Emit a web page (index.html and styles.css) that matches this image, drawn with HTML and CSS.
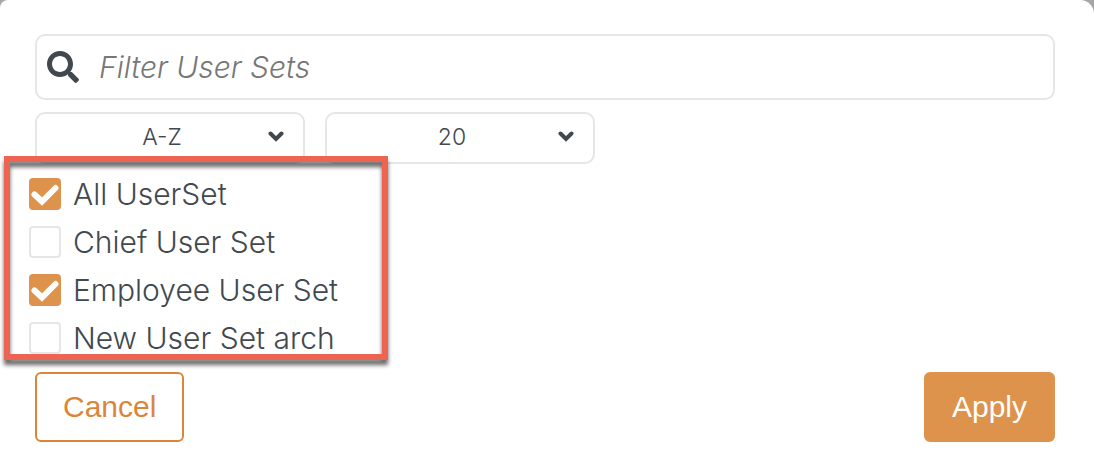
FILE: index.html
```
<!DOCTYPE html>
<html lang="en">
<head>
    <meta charset="UTF-8">
    <meta name="viewport" content="width=device-width, initial-scale=1.0">
    <title>Filter User Sets</title>
    <link rel="stylesheet" href="styles.css">
</head>
<body>
    <form class="dialog">
        <div class="search">
            <svg class="search-icon" viewBox="0 0 512 512" aria-hidden="true"><path d="M505 442.700 405.300 343c-4.500-4.500-10.600-7-17-7H372c27.600-35.300 44-79.700 44-128C416 93.100 322.900 0 208 0S0 93.100 0 208s93.100 208 208 208c48.300 0 92.700-16.400 128-44v16.300c0 6.400 2.500 12.500 7 17l99.700 99.700c9.400 9.400 24.600 9.400 33.900 0l28.300-28.300c9.400-9.400 9.400-24.600.1-34zM208 336c-70.700 0-128-57.200-128-128 0-70.700 57.200-128 128-128 70.700 0 128 57.200 128 128 0 70.700-57.200 128-128 128z"/></svg>
            <input type="text" id="filter" placeholder="Filter User Sets" aria-label="Filter User Sets">
        </div>

        <div class="selects">
            <div class="select">
                <select id="sortOrder" aria-label="Sort order">
                    <option>A-Z</option>
                    <option>Z-A</option>
                </select>
                <svg class="chevron" viewBox="0 0 16 12" aria-hidden="true"><path d="M2.500 3.500 8 9l5.500-5.500"/></svg>
            </div>
            <div class="select">
                <select id="pageSize" aria-label="Results per page">
                    <option>20</option>
                    <option>50</option>
                </select>
                <svg class="chevron" viewBox="0 0 16 12" aria-hidden="true"><path d="M2.500 3.500 8 9l5.500-5.500"/></svg>
            </div>
        </div>

        <div class="user-sets">
            <label class="user-set">
                <input type="checkbox" checked>
                <svg class="tick" viewBox="0 0 32 32" aria-hidden="true"><path d="M5.500 16.500l7.500 7L26.500 10"/></svg>
                <span>All UserSet</span>
            </label>
            <label class="user-set">
                <input type="checkbox">
                <svg class="tick" viewBox="0 0 32 32" aria-hidden="true"><path d="M5.500 16.500l7.500 7L26.500 10"/></svg>
                <span>Chief User Set</span>
            </label>
            <label class="user-set">
                <input type="checkbox" checked>
                <svg class="tick" viewBox="0 0 32 32" aria-hidden="true"><path d="M5.500 16.500l7.500 7L26.500 10"/></svg>
                <span>Employee User Set</span>
            </label>
            <label class="user-set">
                <input type="checkbox">
                <svg class="tick" viewBox="0 0 32 32" aria-hidden="true"><path d="M5.500 16.500l7.500 7L26.500 10"/></svg>
                <span>New User Set arch</span>
            </label>
            <div class="highlight"></div>
        </div>

        <div class="actions">
            <button type="button" class="cancel">Cancel</button>
            <button type="button" class="apply">Apply</button>
        </div>
    </form>
</body>
</html>
```
FILE: styles.css
```
* {
    box-sizing: border-box;
}

body {
    font-family: Inter, sans-serif;
    background: #a6a6a6;
    color: #41494f;
    margin: 0;
}

.dialog {
    min-height: 100vh;
    padding: 34px 39px 26px 35px;
    background: white;
    border-radius: 8px 14px 0 0;
}

.search {
    display: flex;
    align-items: center;
    gap: 20px;
    height: 66px;
    padding: 0 10px;
    border: 2px solid #e6e6e6;
    border-radius: 10px;
}

.search-icon {
    width: 32px;
    height: 32px;
    fill: #41494f;
}

.search input {
    flex: 1;
    min-width: 0;
    padding: 0;
    border: none;
    outline: none;
    background: none;
    font: italic 350 30px Inter, sans-serif;
    color: #41494f;
}

.search input::placeholder {
    color: #777;
    opacity: 1;
}

.selects {
    display: flex;
    gap: 20px;
    margin-top: 12px;
}

.select {
    display: grid;
    align-items: center;
    width: 270px;
}

.select select,
.chevron {
    grid-area: 1 / 1;
}

.select select {
    width: 100%;
    height: 52px;
    padding: 0 16px 2px 0;
    appearance: none;
    border: 2px solid #e6e6e6;
    border-radius: 10px;
    background: white;
    font: 350 23px Inter, sans-serif;
    color: #41494f;
    text-align: center;
    text-align-last: center;
}

.chevron {
    justify-self: end;
    width: 16px;
    height: 12px;
    margin: 0 21px 4px 0;
    fill: none;
    stroke: #41494f;
    stroke-width: 4;
    stroke-linecap: round;
    pointer-events: none;
}

.user-sets {
    position: relative;
    width: fit-content;
    margin: 6px 0 0 -6px;
}

.user-set {
    display: grid;
    grid-template-columns: 32px auto;
    align-items: center;
    column-gap: 12px;
    height: 48px;
    font-size: 30px;
    font-weight: 350;
    line-height: 48px;
}

.user-set input,
.tick {
    grid-area: 1 / 1;
    width: 32px;
    height: 32px;
}

.user-set input {
    appearance: none;
    margin: 0;
    border: 2px solid #e6e6e6;
    border-radius: 4px;
    background: white;
}

.user-set input:checked {
    border-color: #dd934c;
    background: #dd934c;
}

.tick {
    fill: none;
    stroke: white;
    stroke-width: 6;
    stroke-linecap: round;
    pointer-events: none;
    visibility: hidden;
}

.user-set input:checked + .tick {
    visibility: visible;
}

/* marker frame over the list */
.highlight {
    position: absolute;
    top: -14px;
    bottom: 2px;
    left: -25px;
    width: 384px;
    border: 6px solid #ed6453;
    filter: drop-shadow(0 5px 2px rgba(0, 0, 0, 0.6));
    pointer-events: none;
}

.actions {
    display: flex;
    justify-content: space-between;
    margin-top: 10px;
}

button {
    height: 70px;
    padding: 0 26px;
    border: 2px solid #dc8539;
    border-radius: 6px;
    background: white;
    color: #dc8539;
    font: 30px "Liberation Sans", Arial, sans-serif;
    cursor: pointer;
}

.apply {
    border-color: #dd934c;
    background: #dd934c;
    color: white;
}
```
